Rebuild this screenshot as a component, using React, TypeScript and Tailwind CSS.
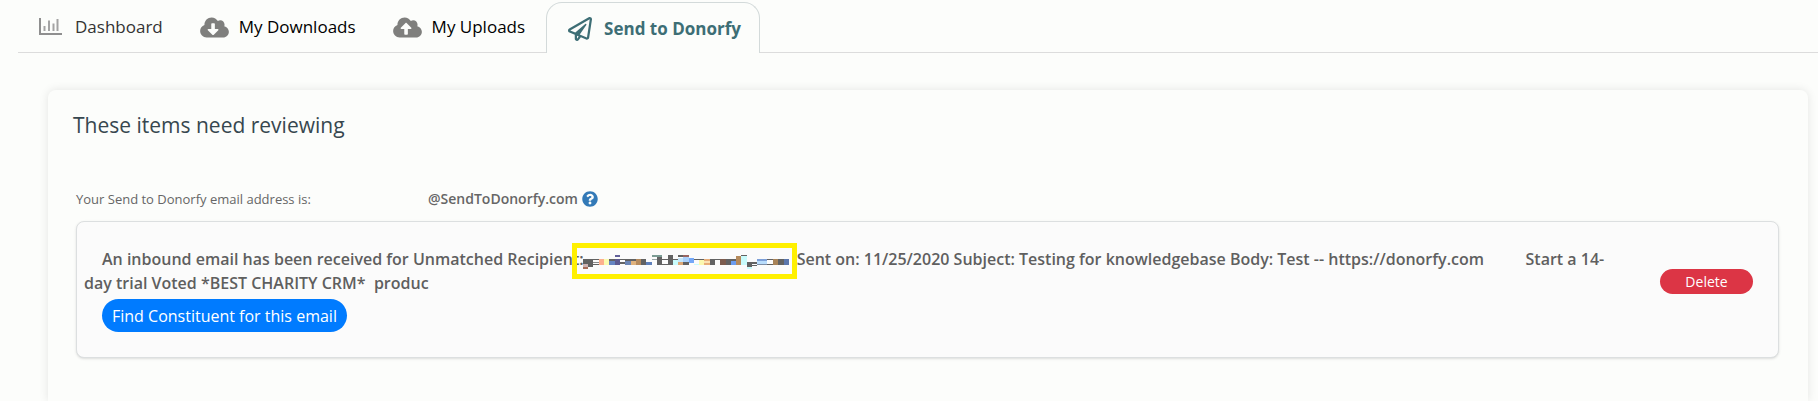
import type { ReactNode } from "react";
import {
  FaCloudDownloadAlt,
  FaCloudUploadAlt,
  FaQuestionCircle,
  FaRegPaperPlane,
} from "react-icons/fa";
import { clsx } from "clsx";

type Tab = {
  id: string;
  label: string;
  icon: ReactNode;
  className: string;
  active?: boolean;
};

function ChartIcon() {
  return (
    <svg viewBox="0 0 24 18" className="h-[18px] w-6 shrink-0" aria-hidden="true">
      <path d="M1 0v16h22" fill="none" stroke="#8f8f8f" strokeWidth="2" />
      <path d="M5.500 8v5M10 2.500V13M14.500 5.500V13M18.500 1V13" fill="none" stroke="#a3a3a3" strokeWidth="2" />
    </svg>
  );
}

const TABS: Tab[] = [
  {
    id: "dashboard",
    label: "Dashboard",
    icon: <ChartIcon />,
    className: "gap-3 text-[#333]",
  },
  {
    id: "downloads",
    label: "My Downloads",
    icon: <FaCloudDownloadAlt className="h-[23px] w-[29px] text-[#7f7f7d]" />,
    className: "gap-2.5 text-black",
  },
  {
    id: "uploads",
    label: "My Uploads",
    icon: <FaCloudUploadAlt className="h-[23px] w-[29px] text-[#7f7f7d]" />,
    className: "gap-2.5 text-black",
  },
  {
    id: "send",
    label: "Send to Donorfy",
    icon: <FaRegPaperPlane className="size-6" />,
    className: "gap-3 text-[#3d6e75]",
    active: true,
  },
];

// [x, y, width, height, fill]
const BLOCKS: [number, number, number, number, string][] = [
  [69, 87, 15, 15, "#626262"],
  [69, 102, 15, 9, "#cdb3b3"],
  [69, 111, 15, 6, "#a86b58"],
  [84, 87, 16, 23, "#626262"],
  [100, 87, 17, 3, "#626262"],
  [100, 94, 17, 3, "#8a8a8a"],
  [100, 102, 17, 3, "#626262"],
  [117, 87, 15, 18, "#fdb08e"],
  [132, 87, 16, 18, "#fbfcb0"],
  [148, 87, 17, 6, "#626262"],
  [148, 93, 17, 12, "#6585c2"],
  [165, 75, 15, 6, "#62609a"],
  [165, 87, 15, 18, "#5c5a90"],
  [180, 87, 16, 3, "#626262"],
  [180, 94, 16, 8, "#626262"],
  [196, 87, 16, 5, "#626262"],
  [196, 92, 16, 13, "#6c86b4"],
  [212, 87, 16, 6, "#626262"],
  [212, 93, 16, 12, "#e0b27c"],
  [228, 87, 15, 18, "#b58a5c"],
  [243, 87, 15, 18, "#626262"],
  [258, 96, 17, 9, "#5f80ba"],
  [275, 75, 30, 4, "#7c9c94"],
  [290, 79, 15, 26, "#626262"],
  [275, 87, 15, 3, "#9aa6a6"],
  [305, 87, 18, 3, "#626262"],
  [305, 102, 18, 3, "#626262"],
  [323, 75, 16, 30, "#626262"],
  [339, 87, 15, 3, "#626262"],
  [339, 90, 15, 15, "#c8fbfb"],
  [354, 75, 16, 4, "#626262"],
  [354, 82, 16, 12, "#c5e6fb"],
  [354, 94, 16, 9, "#dca877"],
  [370, 75, 17, 5, "#9a6560"],
  [370, 80, 17, 14, "#a8d0fb"],
  [370, 96, 17, 9, "#626262"],
  [387, 82, 15, 15, "#74a8f8"],
  [402, 87, 15, 3, "#626262"],
  [402, 102, 15, 3, "#c8fbfb"],
  [417, 87, 15, 3, "#626262"],
  [417, 90, 15, 15, "#fbf8b0"],
  [432, 87, 18, 18, "#e8ae78"],
  [432, 93, 18, 5, "#fbe2b4"],
  [450, 87, 15, 18, "#626262"],
  [465, 87, 15, 3, "#626262"],
  [480, 87, 17, 18, "#7c5c4e"],
  [497, 87, 15, 18, "#626262"],
  [512, 87, 16, 4, "#626262"],
  [512, 91, 16, 14, "#6b9df0"],
  [528, 78, 15, 27, "#b58a5c"],
  [543, 75, 17, 3, "#626262"],
  [543, 78, 17, 27, "#c8fbfb"],
  [560, 96, 15, 15, "#626262"],
  [560, 111, 15, 6, "#c8fbfb"],
  [575, 96, 17, 4, "#626262"],
  [575, 105, 17, 3, "#626262"],
  [592, 87, 30, 4, "#7da0d8"],
  [592, 91, 30, 10, "#b8dcfb"],
  [592, 101, 30, 4, "#7c8ca4"],
  [622, 87, 16, 3, "#626262"],
  [622, 102, 16, 3, "#626262"],
  [638, 87, 15, 18, "#a88358"],
  [653, 87, 19, 18, "#626262"],
  [672, 87, 15, 18, "#5a76ac"],
];

function HiddenAddress() {
  return (
    <span className="relative inline-block h-4 w-[213px] indent-0 align-middle" aria-label="hidden address">
      <span className="absolute -top-2.5 right-0 h-9 w-[225px] border-[5px] border-[#fff000]">
        <svg viewBox="51 53 645 78" className="block h-full w-full" shapeRendering="crispEdges" aria-hidden="true">
          {BLOCKS.map(([x, y, width, height, fill]) => (
            <rect key={`${x}-${y}`} x={x} y={y} width={width} height={height} fill={fill} />
          ))}
        </svg>
      </span>
    </span>
  );
}

function TabBar() {
  return (
    <nav className="ml-[18px] flex h-[53px] items-stretch pt-0.5 text-[17px]">
      <div className="w-[5px] border-b border-[#dcdcdc]" />
      {TABS.map((tab) => (
        <a
          key={tab.id}
          href={`#${tab.id}`}
          aria-current={tab.active ? "page" : undefined}
          className={clsx(
            "flex items-center whitespace-nowrap",
            tab.active
              ? "rounded-t-2xl border border-b-0 border-[#d3dada] pt-0.5 pr-[18px] pl-[21px] font-bold"
              : "border-b border-[#dcdcdc] pr-[21px] pl-4",
            tab.className
          )}
        >
          {tab.icon}
          {tab.label}
        </a>
      ))}
      <div className="flex-1 border-b border-[#dcdcdc]" />
    </nav>
  );
}

export default function App() {
  return (
    <div className="flex min-h-screen flex-col overflow-hidden bg-[#fcfdfb] font-['Open_Sans',sans-serif]">
      <TabBar />

      <main className="mt-[37px] mr-2.5 ml-12 flex-1 rounded-t-lg px-[25px] pt-[19px] shadow-[0_0_10px_rgba(0,0,0,0.1)]">
        <h1 className="text-[21px] leading-8 text-[#37474f]">These items need reviewing</h1>

        <section className="mt-[46px] mr-1 ml-[3px]">
          <div className="flex items-center text-sm leading-6 text-[#666]">
            <span className="w-[352px] text-[13px]">Your Send to Donorfy email address is:</span>
            <span className="font-semibold">@SendToDonorfy.com</span>
            <a href="#help" aria-label="Help" className="ml-1 text-[#337ab7]">
              <FaQuestionCircle className="size-4" />
            </a>
          </div>

          <article className="mt-2.5 flex items-start justify-between rounded-lg border border-[#dcdfe0] bg-[#fbfbfb] pt-[25px] pr-[25px] pb-[25px] pl-[7px] shadow-sm">
            <div className="max-w-[1530px] flex-1">
              <p className="indent-[18px] text-base leading-6 font-semibold text-[#5f5f5f]">
                An inbound email has been received for Unmatched Recipient:
                <HiddenAddress />
                Sent on: 11/25/2020 Subject: Testing for knowledgebase Body: Test -- https://donorfy.com
                {"\u00a0".repeat(9)} Start a 14-<wbr />day trial Voted *BEST CHARITY CRM*&nbsp; produc
              </p>
              <button
                type="button"
                className="mt-1 ml-[18px] h-[33px] rounded-full bg-[#007bff] px-2.5 text-base text-white"
              >
                Find Constituent for this email
              </button>
            </div>
            <button
              type="button"
              className="mt-[22px] h-[25px] w-[93px] rounded-full bg-[#dc3545] text-sm text-white"
            >
              Delete
            </button>
          </article>
        </section>
      </main>
    </div>
  );
}
